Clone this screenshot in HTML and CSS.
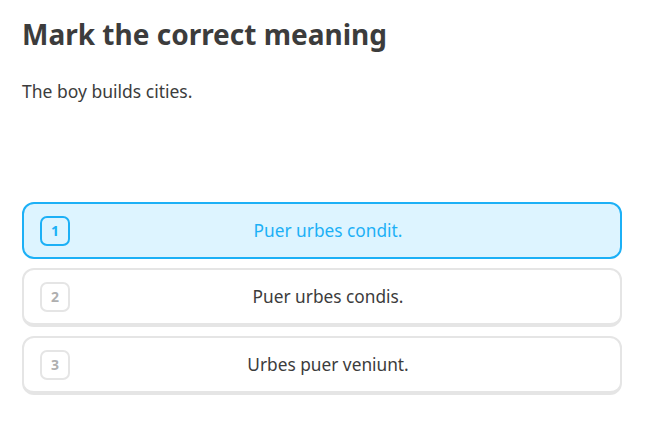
FILE: index.html
```html
<!DOCTYPE html>
<html lang="en">
<head>
<meta charset="utf-8">
<link rel="stylesheet" href="styles.css">
</head>
<body>
<main class="challenge">
  <h1 class="title">Mark the correct meaning</h1>
  <p class="prompt">The boy builds cities.</p>
  <ul class="choices">
    <li class="choice selected"><span class="key">1</span><span class="label">Puer urbes condit.</span></li>
    <li class="choice"><span class="key">2</span><span class="label">Puer urbes condis.</span></li>
    <li class="choice"><span class="key">3</span><span class="label">Urbes puer veniunt.</span></li>
  </ul>
</main>
</body>
</html>
```
FILE: styles.css
```css
html, body {
  margin: 0;
  padding: 0;
  background: #ffffff;
}
body {
  font-family: "Noto Sans", "DejaVu Sans", sans-serif;
  color: #3c3c3c;
}
.challenge {
  width: 600px;
  padding: 14px 0 0 22px;
}
.title {
  margin: 0;
  font-size: 28px;
  line-height: 40px;
  font-weight: 700;
}
.prompt {
  margin: 25px 0 0;
  font-size: 17.5px;
  line-height: 24px;
}
.choices {
  list-style: none;
  margin: 99px 0 0;
  padding: 0;
  display: flex;
  flex-direction: column;
  gap: 9px;
}
.choice {
  display: flex;
  align-items: center;
  height: 53px;
  padding: 0 16px;
  border: 2px solid #e5e5e5;
  border-bottom-width: 4px;
  border-radius: 12px;
  background: #fff;
}
.choice.selected {
  border-color: #1cb0f6;
  border-bottom-width: 2px;
  background: #ddf4ff;
  color: #1cb0f6;
}
.key {
  box-sizing: border-box;
  width: 30px;
  height: 30px;
  border: 2px solid #e5e5e5;
  border-radius: 7px;
  display: flex;
  align-items: center;
  justify-content: center;
  font-size: 14px;
  font-weight: 700;
  color: #afafaf;
}
.selected .key {
  border-color: #1cb0f6;
  color: #1cb0f6;
}
.label {
  flex: 1;
  text-align: center;
  margin-right: 18px;
  font-size: 17.3px;
}
```
